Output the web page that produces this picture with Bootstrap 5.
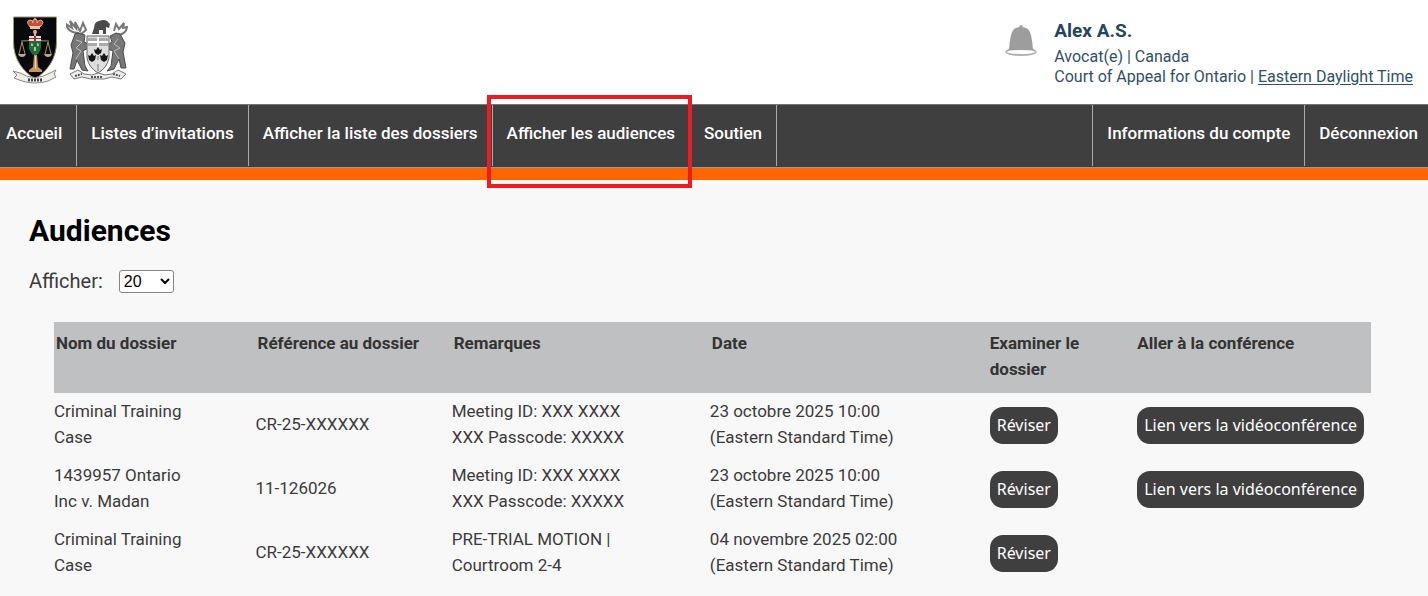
<!DOCTYPE html>
<html lang="fr">
<head>
<meta charset="utf-8">
<meta name="viewport" content="width=device-width, initial-scale=1">
<title>Audiences</title>
<link href="https://cdn.jsdelivr.net/npm/bootstrap@5.3.0/dist/css/bootstrap.min.css" rel="stylesheet">
<style>
  body { background: #f8f8f8; color: #3b3b3b; font-family: Roboto, "Liberation Sans", sans-serif; font-size: 17px; line-height: 26px; }
  .site-header { height: 104px; color: #2f5068; padding: 16px 15px 0 12px; }
  .user-info { font-size: 16px; line-height: 20px; padding-top: 1px; }
  .user-info a { color: inherit; text-underline-offset: 2px; }
  .user-name { font-size: 19px; line-height: 28px; font-weight: 700; color: #234760; margin-bottom: 2px; }
  .bell { margin: 8px 16px 0 0; }
  .main-nav { background: #3f3f3f; border-top: 1px solid #777; height: 64px; border-bottom: 1px solid #999; }
  .main-nav .nav-link { color: #fff; font-weight: 500; line-height: 26px; height: 61px; padding: 15px 14px 0; border-right: 1px solid #aaa; white-space: nowrap; }
  .main-nav .first-link { padding-left: 6px; }
  .main-nav .account-link { border-left: 1px solid #aaa; }
  .main-nav .last-link { border-right: 0; padding-right: 10px; }
  .current-frame { position: absolute; inset: -10px -3px -22px -6px; border: 4px solid #ed1c24; pointer-events: none; z-index: 2; }
  .accent { background: #ff6600; height: 12px; }
  main { padding: 32px 57px 0 29px; }
  h1 { font-size: 30px; line-height: 38px; font-weight: 700; color: #000; margin: 0 0 18px; }
  .page-size { font-size: 20px; line-height: 26px; }
  .page-size select { font: 16px/20px "Liberation Sans", sans-serif; width: 55px; height: 23px; border: 1px solid #858585; border-radius: 3px; background: #fff; color: #000; padding: 0; }
  .hearings { margin: 28px 0 0 25px; }
  .hearings table { table-layout: fixed; width: 100%; }
  .hearings th { background: #bfc0c1; color: #333; font-weight: 700; padding: 8px 8px 11px 2px; vertical-align: top; }
  .hearings td { height: 64px; padding: 5px 8px 7px 0; vertical-align: middle; }
  .hearings td.action-cell { padding: 0 0 0 2px; }
  .btn-hearing { background: #3f3f3f; color: #fff; font-family: "Noto Sans", sans-serif; font-size: 16px; font-weight: 400; line-height: 21px; padding: 8px 7px; border: 0; border-radius: 13px; white-space: nowrap; }
  .btn-hearing:hover { background: #222; color: #fff; }
</style>
</head>
<body>
<header class="site-header bg-white d-flex justify-content-between align-items-start">
  <div class="d-flex">
    <svg width="46" height="70" viewBox="0 0 46 70" role="img" aria-label="Cour de justice">
      <path d="M1.500 1h43v25c0 17-9 29-21.500 37C10.500 55 1.500 43 1.500 26z" fill="#07090d" stroke="#9b9170" stroke-width="1"/>
      <g stroke="#c9b57c" stroke-width="1" fill="none">
        <path d="M9 25q7 1 13-3 7 4 15 3M10 26l-3 12M10 26l3 12M36 26l-3 12M36 26l3 12" opacity=".8"/>
      </g>
      <path d="M6 38h8q-1 3-4 3t-4-3zM32 38h8q-1 3-4 3t-4-3z" fill="#b9ac85"/>
      <path d="M18 11q-5-6 0-7 3 0 3 3-1-4 2-4t2 4q1-3 4-3 4 2-1 7z" fill="#c94b3a" stroke="#e0b080" stroke-width="1"/>
      <path d="M18 10h10v3H18z" fill="#e6c9a0"/><circle cx="23" cy="3" r="1" fill="#f0c070"/>
      <path d="M22 14h2v6h-2z" fill="#d9b565"/><circle cx="23" cy="16" r="2" fill="#d9b565"/>
      <path d="M17 20h12v12q-1 5-6 8-5-3-6-8z" fill="#14704a"/>
      <path d="M17 20h12v5H17z" fill="#e8ddd5"/><path d="M22 20h2v5h-2zM17 22h12v1H17z" fill="#b22a38"/>
      <path d="M19 27l2 1v2h-2zM25 27l2 1v2h-2zM22 31h2v4h-2z" fill="#dfbd45"/>
      <path d="M22 39h3l1 12 4 3v2H17v-2l4-3z" fill="#c4985c"/><path d="M23 40h1v13h-1z" fill="#f2d9a2"/>
      <path d="M1 55l7 2q15 9 30 0l6-3-2 4 2 3-8 4q-13 4-26 0l-8-3 3-3z" fill="#f2efe9" stroke="#888" stroke-width="1"/>
      <path d="M16 64h14" stroke="#444" stroke-width="3" stroke-dasharray="2 1"/>
    </svg>
    <svg class="ms-2" width="62" height="64" viewBox="0 0 62 64" role="img" aria-label="Ontario">
      <g fill="none" stroke="#777" stroke-width="2">
        <path d="M13 17Q2 17 0 8l6 4-2-7 6 7-1-6 5 9 3-8 3 7-6 5M48 15l2-7 3 5 5-6-1 5 4-1q-1 7-9 8"/>
      </g>
      <path d="M26 18l2-6q0-6 5-7 5-2 8 0l3 3-1 4-3-1v7h-3v-4h-4v4z" fill="#4b4b4b"/>
      <path d="M12 17l7 2-1 7 4 2v4l-5 3 2 15 3 5-6-1-5-10-3 9H4l3-16-2-8 4-11zM50 17l-6 3 2 6-5 3 1 4 5 2-2 15-4 5 7-2 5-10 2 9h5l-3-16 2-9-5-9z" fill="#777" stroke="#4a4a4a" stroke-width="1"/>
      <path d="M10 24l6 2-6 6 5 3-5 8M52 23l-4 5 6 4-6 3 5 8" fill="none" stroke="#bbb" stroke-width="1"/>
      <path d="M21 20h22v22q-2 10-11 15-9-5-11-15z" fill="#ddd" stroke="#666" stroke-width="1"/>
      <path d="M22 22h20v8H22z" fill="#aaa"/><path d="M32 21v10M22 26h20" stroke="#fff" stroke-width="2"/>
      <g fill="#151515"><path d="M32 31l2 3 2-1-1 4-3 2-3-2-1-4 2 1z"/><path d="M26 37l2 3 2-1-1 5-3 2-3-2-1-5 2 1zM38 37l2 3 2-1-1 5-3 2-3-2-1-5 2 1z"/></g>
      <path d="M32 40v4M32 48v7" stroke="#777"/>
      <path d="M4 58l8-4 6 4 8 1 6-2 7 2 7-1 6-4 8 4-5 5-9-2-8 2H25l-9-2-8 2z" fill="#eee" stroke="#777" stroke-width="1"/>
      <path d="M9 60l7-2M25 61h12M47 58l7 2" stroke="#555" stroke-width="2" stroke-dasharray="2 1"/>
    </svg>
  </div>
  <div class="d-flex align-items-start">
    <svg class="bell" width="34" height="34" viewBox="0 0 34 34" role="img" aria-label="Notifications">
      <circle cx="17" cy="3" r="2" fill="#aaa"/>
      <path d="M6 24q-4 2-5 4 2 4 16 4t16-4q-1-2-5-4z" fill="#b0b0b0"/>
      <ellipse cx="17" cy="28" rx="14" ry="2" fill="#fff"/>
      <path d="M5 26Q6 9 10 5q7-4 14 0 4 4 5 21z" fill="#9d9d9d"/>
    </svg>
    <div class="user-info">
      <div class="user-name">Alex A.S.</div>
      <div>Avocat(e) | Canada</div>
      <div>Court of Appeal for Ontario | <a href="#">Eastern Daylight Time</a></div>
    </div>
  </div>
</header>
<nav class="main-nav d-flex justify-content-between">
  <div class="d-flex">
    <a class="nav-link first-link" href="#">Accueil</a>
    <a class="nav-link" href="#">Listes d’invitations</a>
    <a class="nav-link" href="#">Afficher la liste des dossiers</a>
    <a class="nav-link position-relative" href="#" aria-current="page">Afficher les audiences<span class="current-frame"></span></a>
    <a class="nav-link" href="#">Soutien</a>
  </div>
  <div class="d-flex">
    <a class="nav-link account-link" href="#">Informations du compte</a>
    <a class="nav-link last-link" href="#">Déconnexion</a>
  </div>
</nav>
<div class="accent"></div>
<main>
  <h1>Audiences</h1>
  <div class="page-size d-flex align-items-center gap-3">
    <label for="page-size">Afficher:</label>
    <select id="page-size"><option>20</option></select>
  </div>
  <div class="hearings">
    <table>
      <colgroup><col style="width:15.3%"><col style="width:14.9%"><col style="width:19.6%"><col style="width:21.1%"><col style="width:11.2%"><col></colgroup>
      <thead>
        <tr><th>Nom du dossier</th><th>Référence au dossier</th><th>Remarques</th><th>Date</th><th>Examiner le dossier</th><th>Aller à la conférence</th></tr>
      </thead>
      <tbody>
        <tr><td>Criminal Training<br>Case</td><td>CR-25-XXXXXX</td><td>Meeting ID: XXX XXXX<br>XXX Passcode: XXXXX</td><td>23 octobre 2025 10:00<br>(Eastern Standard Time)</td><td class="action-cell"><button type="button" class="btn btn-hearing">Réviser</button></td><td class="action-cell"><button type="button" class="btn btn-hearing">Lien vers la vidéoconférence</button></td></tr>
        <tr><td>1439957 Ontario<br>Inc v. Madan</td><td>11-126026</td><td>Meeting ID: XXX XXXX<br>XXX Passcode: XXXXX</td><td>23 octobre 2025 10:00<br>(Eastern Standard Time)</td><td class="action-cell"><button type="button" class="btn btn-hearing">Réviser</button></td><td class="action-cell"><button type="button" class="btn btn-hearing">Lien vers la vidéoconférence</button></td></tr>
        <tr><td>Criminal Training<br>Case</td><td>CR-25-XXXXXX</td><td>PRE-TRIAL MOTION |<br>Courtroom 2-4</td><td>04 novembre 2025 02:00<br>(Eastern Standard Time)</td><td class="action-cell"><button type="button" class="btn btn-hearing">Réviser</button></td><td></td></tr>
      </tbody>
    </table>
  </div>
</main>
<script src="https://cdn.jsdelivr.net/npm/bootstrap@5.3.0/dist/js/bootstrap.bundle.min.js"></script>
</body>
</html>
